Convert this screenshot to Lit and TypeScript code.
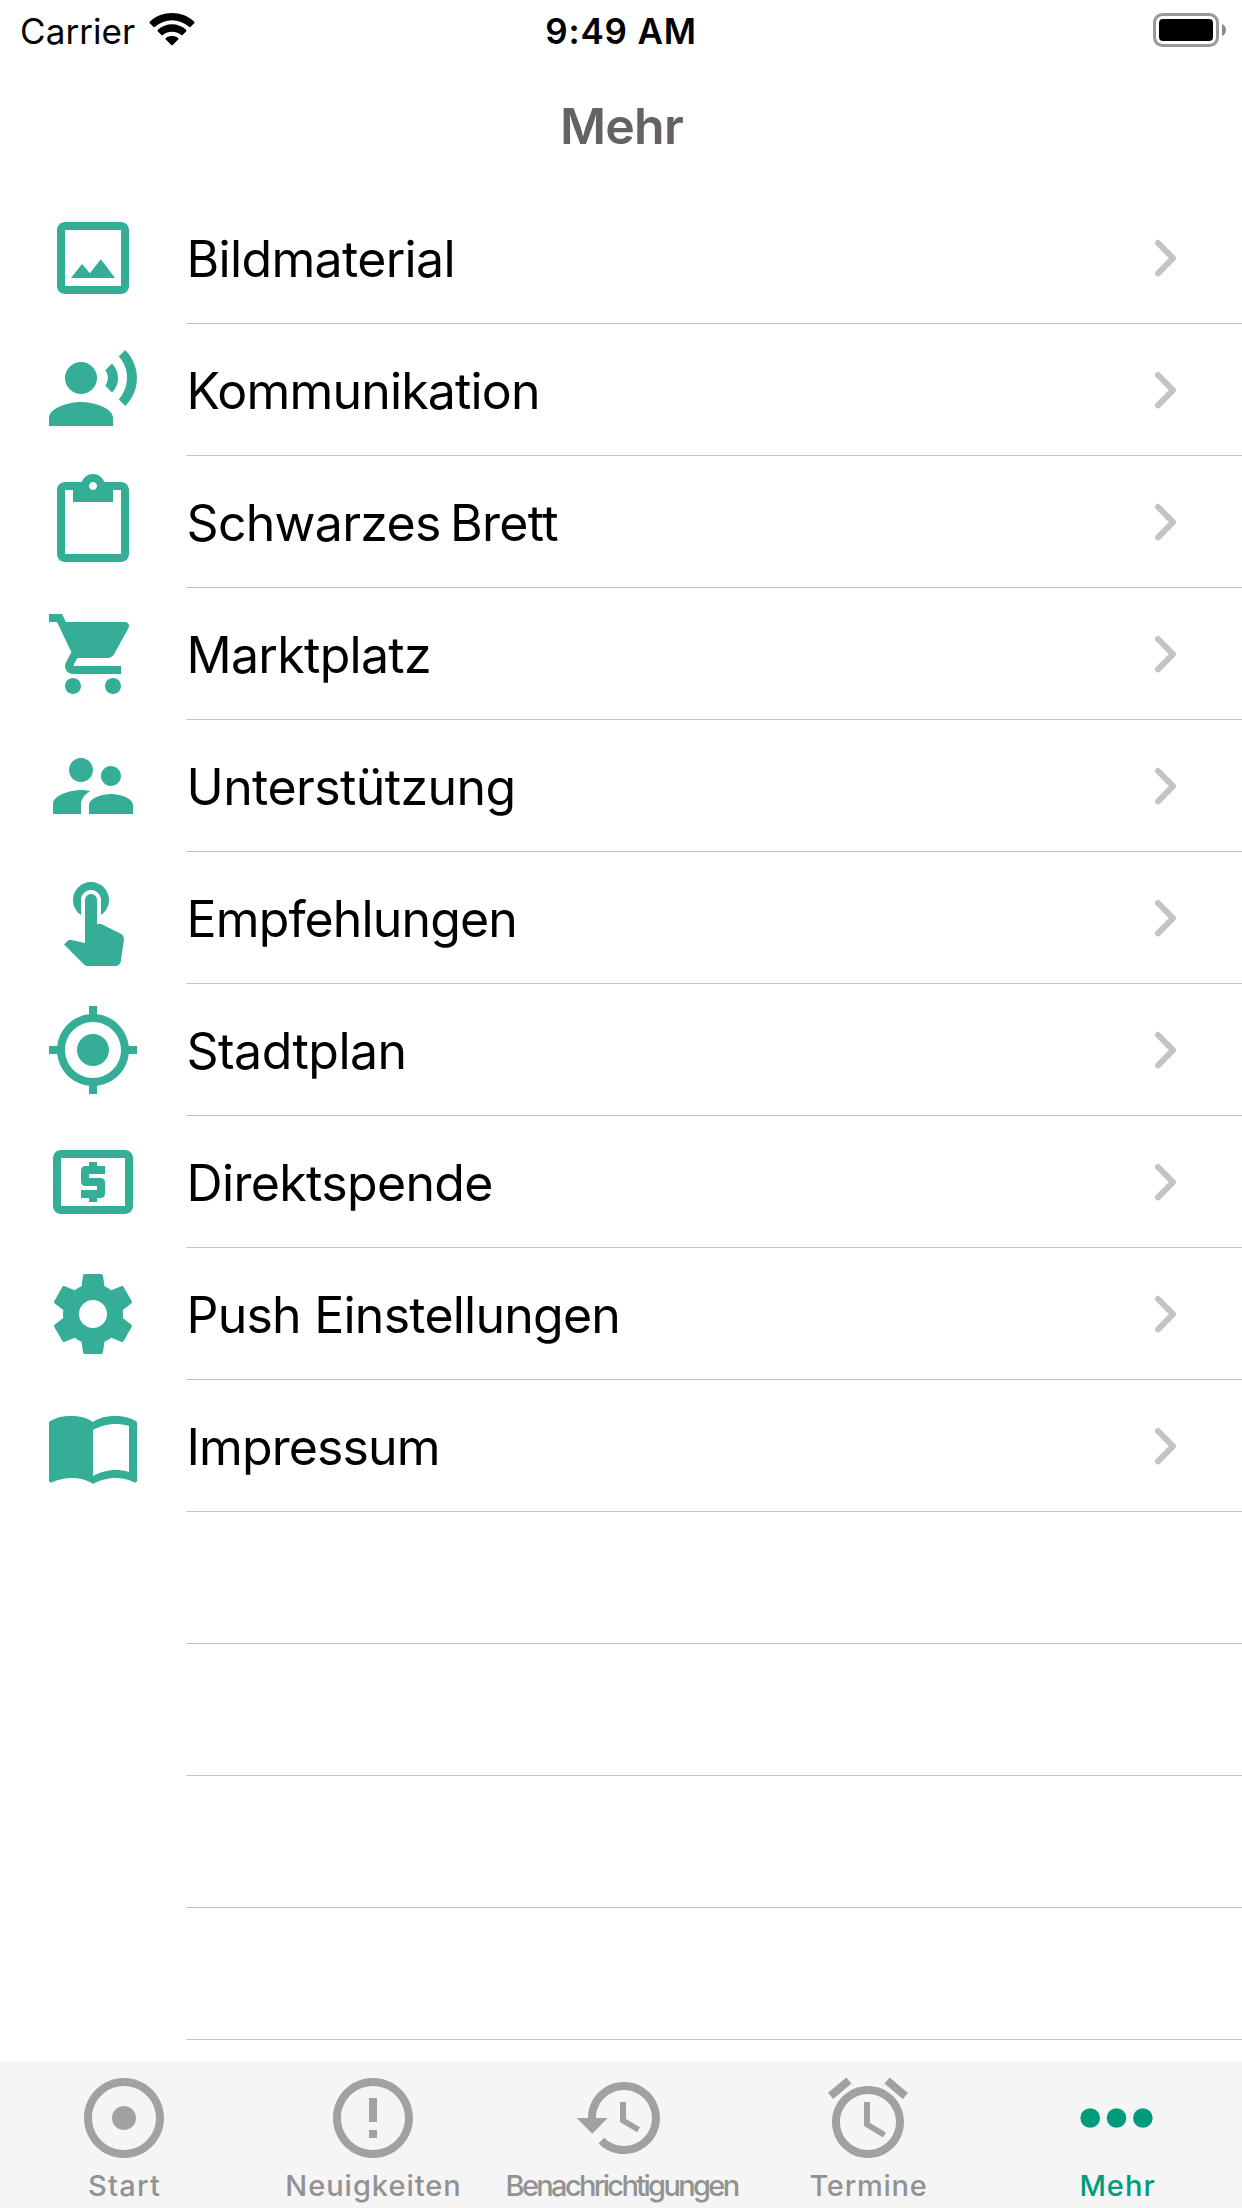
import { LitElement, html, css, svg } from "lit";
import { classMap } from "lit/directives/class-map.js";
import { styleMap } from "lit/directives/style-map.js";

interface MenuItem {
  label: string;
  tracking: number;
  wordSpacing?: number;
  path: string;
}

interface Tab {
  label: string;
  tracking: number;
  path: string;
  active?: boolean;
}

const MENU: MenuItem[] = [
  {
    label: "Bildmaterial",
    tracking: -0.66,
    path: "M19 5v14H5V5h14m0-2H5c-1.1 0-2 .9-2 2v14c0 1.1.9 2 2 2h14c1.1 0 2-.9 2-2V5c0-1.1-.9-2-2-2zM13.96 12.29l-2.75 3.54-1.96-2.36L6.5 17h11l-3.54-4.71z",
  },
  {
    label: "Kommunikation",
    tracking: -0.82,
    path: "M5 9a4 4 0 1 0 8 0a4 4 0 1 0-8 0zM9 15c-2.67 0-8 1.34-8 4v2h16v-2c0-2.66-5.33-4-8-4zm7.76-9.64l-1.68 1.69c.84 1.18.84 2.71 0 3.89l1.68 1.69c2.02-2.02 2.02-5.07 0-7.27zM20.07 2l-1.63 1.63c2.77 3.02 2.77 7.56 0 10.74L20.07 16c3.9-3.89 3.91-9.95 0-14z",
  },
  {
    label: "Schwarzes Brett",
    tracking: -0.7,
    wordSpacing: -4,
    path: "M19 2h-4.18C14.4.84 13.3 0 12 0c-1.3 0-2.4.84-2.82 2H5c-1.1 0-2 .9-2 2v16c0 1.1.9 2 2 2h14c1.1 0 2-.9 2-2V4c0-1.1-.9-2-2-2zm-7 0c.55 0 1 .45 1 1s-.45 1-1 1-1-.45-1-1 .45-1 1-1zm7 18H5V4h2v3h10V4h2v16z",
  },
  {
    label: "Marktplatz",
    tracking: -0.7,
    path: "M7 18c-1.1 0-1.99.9-1.99 2S5.9 22 7 22s2-.9 2-2-.9-2-2-2zM1 2v2h2l3.6 7.59-1.35 2.45c-.16.28-.25.61-.25.96 0 1.1.9 2 2 2h12v-2H7.42c-.14 0-.25-.11-.25-.25l.03-.12.9-1.63h7.45c.75 0 1.41-.41 1.75-1.03l3.58-6.49c.08-.14.12-.31.12-.48 0-.55-.45-1-1-1H5.21l-.94-2H1zm16 16c-1.1 0-1.99.9-1.99 2s.89 2 1.99 2 2-.9 2-2-.9-2-2-2z",
  },
  {
    label: "Unterstützung",
    tracking: -0.58,
    path: "M16.5 12c1.38 0 2.49-1.12 2.49-2.5S17.88 7 16.5 7C15.12 7 14 8.12 14 9.5s1.12 2.5 2.5 2.5zM9 11c1.66 0 2.99-1.34 2.99-3S10.66 5 9 5C7.34 5 6 6.34 6 8s1.34 3 3 3zm7.5 3c-1.83 0-5.5.92-5.5 2.75V19h11v-2.25c0-1.83-3.67-2.75-5.5-2.75zM9 13c-2.33 0-7 1.17-7 3.5V19h7v-2.25c0-.85.33-2.34 2.37-3.47C10.5 13.1 9.66 13 9 13z",
  },
  {
    label: "Empfehlungen",
    tracking: -0.86,
    path: "M9 11.24V7.5C9 6.12 10.12 5 11.5 5S14 6.12 14 7.5v3.74c1.21-.81 2-2.18 2-3.74C16 5.01 13.99 3 11.5 3S7 5.01 7 7.5c0 1.56.79 2.93 2 3.74zm9.84 4.63l-4.54-2.26c-.17-.07-.35-.11-.54-.11H13v-6c0-.83-.67-1.5-1.5-1.5S10 6.67 10 7.5v10.74l-3.43-.72c-.08-.01-.15-.03-.24-.03-.31 0-.59.13-.79.33l-.79.8 4.94 4.94c.27.27.65.44 1.06.44h6.79c.75 0 1.33-.55 1.44-1.28l.75-5.27c.01-.07.02-.14.02-.2 0-.62-.38-1.16-.91-1.38z",
  },
  {
    label: "Stadtplan",
    tracking: -0.53,
    path: "M12 8c-2.21 0-4 1.79-4 4s1.79 4 4 4 4-1.79 4-4-1.79-4-4-4zm8.94 3c-.46-4.17-3.77-7.48-7.94-7.94V1h-2v2.06C6.83 3.52 3.52 6.83 3.06 11H1v2h2.06c.46 4.17 3.77 7.48 7.94 7.94V23h2v-2.06c4.17-.46 7.48-3.77 7.94-7.94H23v-2h-2.06zM12 19c-3.87 0-7-3.13-7-7s3.13-7 7-7 7 3.13 7 7-3.13 7-7 7z",
  },
  {
    label: "Direktspende",
    tracking: -0.65,
    path: "M11 17h2v-1h1c.55 0 1-.45 1-1v-3c0-.55-.45-1-1-1h-3v-1h4V8h-2V7h-2v1h-1c-.55 0-1 .45-1 1v3c0 .55.45 1 1 1h3v1H9v2h2v1zm9-13H4c-1.11 0-1.99.89-1.99 2L2 18c0 1.11.89 2 2 2h16c1.11 0 2-.89 2-2V6c0-1.11-.89-2-2-2zm0 14H4V6h16v12z",
  },
  {
    label: "Push Einstellungen",
    tracking: -0.76,
    path: "M19.43 12.98c.04-.32.07-.64.07-.98s-.03-.66-.07-.98l2.11-1.65c.19-.15.24-.42.12-.64l-2-3.46c-.12-.22-.39-.3-.61-.22l-2.49 1c-.52-.4-1.08-.73-1.69-.98l-.38-2.65C14.46 2.18 14.25 2 14 2h-4c-.25 0-.46.18-.49.42l-.38 2.65c-.61.25-1.17.59-1.69.98l-2.49-1c-.23-.09-.49 0-.61.22l-2 3.46c-.13.22-.07.49.12.64l2.11 1.65c-.04.32-.07.65-.07.98s.03.66.07.98l-2.11 1.65c-.19.15-.24.42-.12.64l2 3.46c.12.22.39.3.61.22l2.49-1c.52.4 1.08.73 1.69.98l.38 2.65c.03.24.24.42.49.42h4c.25 0 .46-.18.49-.42l.38-2.65c.61-.25 1.17-.59 1.69-.98l2.49 1c.23.09.49 0 .61-.22l2-3.46c.12-.22.07-.49-.12-.64l-2.11-1.65zM12 15.5c-1.93 0-3.5-1.57-3.5-3.5s1.57-3.5 3.5-3.5 3.5 1.57 3.5 3.5-1.57 3.5-3.5 3.5z",
  },
  {
    label: "Impressum",
    tracking: -0.88,
    path: "M21 5c-1.11-.35-2.33-.5-3.5-.5-1.95 0-4.05.4-5.5 1.5-1.45-1.1-3.55-1.5-5.5-1.5S2.45 4.9 1 6v14.65c0 .25.25.5.5.5.1 0 .15-.05.25-.05C3.1 20.45 5.05 20 6.5 20c1.95 0 4.05.4 5.5 1.5 1.35-.85 3.8-1.5 5.5-1.5 1.65 0 3.35.3 4.75 1.05.1.05.15.05.25.05.25 0 .5-.25.5-.5V6c-.6-.45-1.25-.75-2-1zm0 13.5c-1.1-.35-2.3-.5-3.5-.5-1.7 0-4.15.65-5.5 1.5V8c1.35-.85 3.8-1.5 5.5-1.5 1.2 0 2.4.15 3.5.5v11.5z",
  },
];

const EMPTY_ROWS = 4;

const TABS: Tab[] = [
  {
    label: "Start",
    tracking: 1.27,
    path: "M12 2C6.49 2 2 6.49 2 12s4.49 10 10 10 10-4.49 10-10S17.51 2 12 2zm0 18c-4.41 0-8-3.59-8-8s3.59-8 8-8 8 3.59 8 8-3.59 8-8 8zm3-8c0 1.66-1.34 3-3 3s-3-1.34-3-3 1.34-3 3-3 3 1.34 3 3z",
  },
  {
    label: "Neuigkeiten",
    tracking: 0.98,
    path: "M11 15h2v2h-2zm0-8h2v6h-2zm.99-5C6.47 2 2 6.48 2 12s4.47 10 9.99 10C17.52 22 22 17.52 22 12S17.52 2 11.99 2zM12 20c-4.42 0-8-3.58-8-8s3.58-8 8-8 8 3.58 8 8-3.58 8-8 8z",
  },
  {
    label: "Benachrichtigungen",
    tracking: -2.66,
    path: "M12.75 3c-4.97 0-9 4.03-9 9H.92l3.88 3.95L8.68 12H5.75c0-3.87 3.13-7 7-7s7 3.13 7 7-3.13 7-7 7c-1.93 0-3.68-.79-4.94-2.06l-1.42 1.42C8.02 19.99 10.26 21 12.75 21c4.97 0 9-4.03 9-9s-4.03-9-9-9zm-1 5v5l4.28 2.54.72-1.21-3.5-2.08V8H11.75z",
  },
  {
    label: "Termine",
    tracking: 0.75,
    path: "M22 5.72l-4.6-3.86-1.29 1.53 4.6 3.86L22 5.72zM7.88 3.39L6.6 1.86 2 5.71l1.29 1.53 4.59-3.85zM12.5 8H11v6l4.75 2.85.75-1.23-4-2.37V8zM12 4c-4.97 0-9 4.03-9 9s4.02 9 9 9c4.97 0 9-4.03 9-9s-4.03-9-9-9zm0 16c-3.87 0-7-3.13-7-7s3.13-7 7-7 7 3.13 7 7-3.13 7-7 7z",
  },
  {
    label: "Mehr",
    tracking: 1.02,
    active: true,
    path: "M2.85 12a2.45 2.45 0 1 0 4.9 0a2.45 2.45 0 1 0-4.9 0zM9.43 12a2.45 2.45 0 1 0 4.9 0a2.45 2.45 0 1 0-4.9 0zM16.02 12a2.45 2.45 0 1 0 4.9 0a2.45 2.45 0 1 0-4.9 0z",
  },
];

const icon = (path: string) =>
  html`<svg class="icon" viewBox="0 0 24 24">${svg`<path d=${path}></path>`}</svg>`;

class StatusBar extends LitElement {
  static styles = css`
    :host {
      display: grid;
      grid-template-columns: 1fr auto 1fr;
      height: 60px;
      color: #000;
      font-size: 35px;
      line-height: 63px;
      white-space: nowrap;
    }
    .left {
      display: flex;
      padding-left: 20px;
      letter-spacing: 0.08px;
    }
    .wifi {
      width: 46px;
      height: 34px;
      margin: 13px 0 0 14px;
    }
    .time {
      font-weight: 600;
      letter-spacing: 0.83px;
    }
    .right {
      display: flex;
      justify-content: flex-end;
      padding-right: 15px;
    }
    .battery {
      width: 74px;
      height: 34px;
      margin-top: 13px;
    }
  `;

  render() {
    return html`
      <div class="left">
        <span>Carrier</span>
        <svg class="wifi" viewBox="0 0 46 34">
          <path d="M1 10.4Q0 9.4 1 8.4C13 -2.8 33 -2.8 45 8.4Q46 9.4 45 10.4L41.6 13.8Q40.8 14.5 40 13.8C30 5 16 5 6 13.8Q5.2 14.5 4.4 13.8Z"></path>
          <path d="M8.9 18.4Q8.1 17.6 8.9 16.8C17 9.4 29 9.4 37.1 16.8Q37.9 17.6 37.1 18.4L33.5 22Q32.8 22.6 32.1 22C27 17.6 19 17.6 13.9 22Q13.2 22.6 12.5 22Z"></path>
          <path d="M16.8 26.4Q16.1 25.7 16.9 25C20.4 22.4 25.6 22.4 29.1 25Q29.9 25.7 29.2 26.4L23.7 32Q23 32.7 22.3 32Z"></path>
        </svg>
      </div>
      <div class="time">9:49 AM</div>
      <div class="right">
        <svg class="battery" viewBox="0 0 74 34">
          <rect x="1.5" y="1.5" width="63" height="31" rx="8" fill="none" stroke="#999" stroke-width="3"></rect>
          <rect x="6" y="6" width="54" height="22" rx="4"></rect>
          <path d="M69 11C74.3 13.3 74.3 20.7 69 23Z" fill="#8a8a8a"></path>
        </svg>
      </div>
    `;
  }
}
customElements.define("status-bar", StatusBar);

class MenuList extends LitElement {
  static styles = css`
    :host {
      display: flex;
      flex-direction: column;
    }
    .row {
      display: flex;
      flex: none;
      height: 132px;
    }
    .lead {
      flex: none;
      display: flex;
      align-items: center;
      width: 141px;
      padding-left: 45px;
    }
    .icon {
      width: 96px;
      height: 96px;
      fill: #34ae96;
    }
    .body {
      flex: 1;
      display: flex;
      align-items: center;
      justify-content: space-between;
      padding-right: 64px;
      border-bottom: 1px solid #c4c4c6;
    }
    .label {
      padding: 3px 0 0 0.5px;
      font-size: 50px;
      line-height: 60px;
      color: #000;
      white-space: nowrap;
    }
    .chevron {
      width: 24px;
      height: 38px;
      fill: none;
      stroke: #c4c4c6;
      stroke-width: 6;
      stroke-linecap: round;
      stroke-linejoin: round;
    }
  `;

  render() {
    return html`
      ${MENU.map(
        (item) => html`
          <div class="row">
            <div class="lead">${icon(item.path)}</div>
            <div class="body">
              <span
                class="label"
                style=${styleMap({
                  letterSpacing: `${item.tracking}px`,
                  wordSpacing: `${item.wordSpacing ?? 0}px`,
                })}
                >${item.label}</span
              >
              <svg class="chevron" viewBox="0 0 24 38"><path d="M4 4L19 19.2L4 34.4"></path></svg>
            </div>
          </div>
        `,
      )}
      ${Array.from(
        { length: EMPTY_ROWS },
        () => html`<div class="row"><div class="lead"></div><div class="body"></div></div>`,
      )}
    `;
  }
}
customElements.define("menu-list", MenuList);

class TabBar extends LitElement {
  static styles = css`
    :host {
      display: grid;
      grid-template-columns: 248px 250px 246px 248px 250px;
      height: 147px;
      background: #f5f5f5;
    }
    .tab {
      display: flex;
      flex-direction: column;
      align-items: center;
      padding-top: 9px;
      color: #929292;
    }
    .icon {
      flex: none;
      width: 96px;
      height: 96px;
      fill: #a1a1a1;
    }
    .label {
      font-size: 29px;
      font-weight: 500;
      line-height: 36px;
      margin-top: 2px;
      padding-left: 1px;
      white-space: nowrap;
    }
    .active {
      color: #009b7c;
    }
    .active .icon {
      fill: #009b7c;
    }
  `;

  render() {
    return TABS.map(
      (tab) => html`
        <div class=${classMap({ tab: true, active: !!tab.active })}>
          ${icon(tab.path)}
          <span class="label" style=${styleMap({ letterSpacing: `${tab.tracking}px` })}>${tab.label}</span>
        </div>
      `,
    );
  }
}
customElements.define("tab-bar", TabBar);

class AppRoot extends LitElement {
  static styles = css`
    :host {
      display: flex;
      flex-direction: column;
      width: 1242px;
      height: 2208px;
      overflow: hidden;
      background: #fff;
      font-family: Inter, "Liberation Sans", sans-serif;
    }
    status-bar,
    .title,
    tab-bar {
      flex: none;
    }
    .title {
      height: 132px;
      padding-left: 1px;
      box-sizing: border-box;
      text-align: center;
      font-size: 50px;
      font-weight: 600;
      line-height: 133px;
      letter-spacing: -0.77px;
      color: #666261;
    }
    menu-list {
      flex: 1;
      min-height: 0;
    }
  `;

  render() {
    return html`
      <status-bar></status-bar>
      <div class="title">Mehr</div>
      <menu-list></menu-list>
      <tab-bar></tab-bar>
    `;
  }
}
customElements.define("app-root", AppRoot);
